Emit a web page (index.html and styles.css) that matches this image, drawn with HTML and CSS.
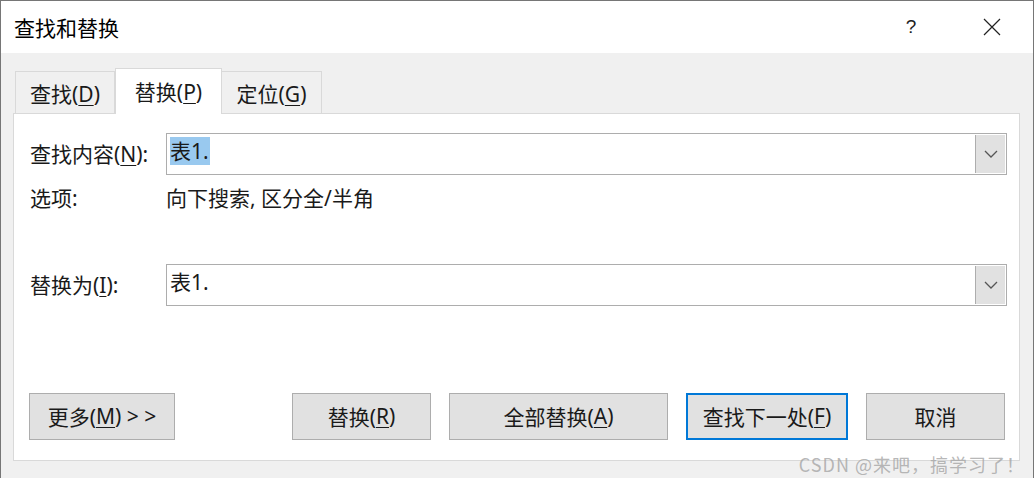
FILE: index.html
```html
<!DOCTYPE html>
<html lang="zh-CN">
<head>
<meta charset="utf-8">
<title>查找和替换</title>
<link rel="stylesheet" href="styles.css">
</head>
<body>
<div class="window">
  <div class="titlebar">
    <div class="title">查找和替换</div>
    <div class="tb-btn help">?</div>
    <div class="tb-btn close">
      <svg width="18" height="18" viewBox="0 0 18 18"><path d="M1 1 L17 17 M17 1 L1 17" stroke="#222" stroke-width="1.2" fill="none"/></svg>
    </div>
  </div>
  <div class="client">
    <div class="tabs">
      <div class="tab">查找(<u>D</u>)</div>
      <div class="tab active">替换(<u>P</u>)</div>
      <div class="tab">定位(<u>G</u>)</div>
    </div>
    <div class="panel">
      <div class="row field-row">
        <div class="label">查找内容(<u>N</u>):</div>
        <div class="combo">
          <div class="combo-text"><span class="sel">表1.</span></div>
          <div class="combo-btn"><svg width="14" height="8" viewBox="0 0 14 8"><path d="M1 1 L7 7 L13 1" stroke="#555" stroke-width="1.3" fill="none"/></svg></div>
        </div>
      </div>
      <div class="row options-row">
        <div class="label">选项:</div>
        <div class="options">向下搜索, 区分全/半角</div>
      </div>
      <div class="row field-row replace-row">
        <div class="label">替换为(<u>I</u>):</div>
        <div class="combo">
          <div class="combo-text">表1.</div>
          <div class="combo-btn"><svg width="14" height="8" viewBox="0 0 14 8"><path d="M1 1 L7 7 L13 1" stroke="#555" stroke-width="1.3" fill="none"/></svg></div>
        </div>
      </div>
      <div class="buttons">
        <div class="btn more">更多(<u>M</u>) &gt; &gt;</div>
        <div class="spacer"></div>
        <div class="btn replace">替换(<u>R</u>)</div>
        <div class="btn replace-all">全部替换(<u>A</u>)</div>
        <div class="btn find-next">查找下一处(<u>F</u>)</div>
        <div class="btn cancel">取消</div>
      </div>
    </div>
    <div class="watermark">CSDN @来吧，搞学习了！</div>
  </div>
</div>
</body>
</html>
```
FILE: styles.css
```css
* { box-sizing: border-box; }
html, body {
  margin: 0;
  padding: 0;
  width: 1034px;
  height: 478px;
  overflow: hidden;
  background: #f0f0f0;
}
body {
  font-family: "Noto Sans", "Noto Sans CJK SC", sans-serif;
  color: #1a1a1a;
}
u { text-decoration-thickness: 1px; text-underline-offset: 3px; }

.window {
  width: 1034px;
  height: 478px;
  border: 1px solid #767676;
  border-bottom: none;
  display: flex;
  flex-direction: column;
  background: #f0f0f0;
}
.titlebar {
  height: 52px;
  background: #fff;
  display: flex;
  align-items: center;
  flex: none;
}
.title {
  font-size: 21px;
  line-height: 24px;
  padding-left: 13px;
  flex: 1;
  color: #000;
  margin-top: 1px;
}
.tb-btn {
  display: flex;
  align-items: center;
  justify-content: center;
}
.help {
  width: 36px;
  font-size: 19px;
  font-family: "Liberation Sans", sans-serif;
  color: #222;
  margin-right: 45px;
}
.close {
  width: 36px;
  margin-right: 23px;
}

.client {
  flex: 1;
  position: relative;
  padding: 15px 13px 0 12px;
  display: flex;
  flex-direction: column;
}
.tabs {
  display: flex;
  align-items: flex-end;
  padding-left: 2px;
  height: 45px;
  position: relative;
  z-index: 1;
}
.tab {
  height: 42px;
  width: 100px;
  border: 1px solid #d9d9d9;
  border-bottom: none;
  background: #f0f0f0;
  font-size: 21px;
  line-height: 40px;
  text-align: center;
  padding-top: 2px;
}
.tab + .tab { border-left: none; }
.tab.active {
  height: 46px;
  width: 107px;
  margin-bottom: -1px;
  background: #fff;
  border-left: 1px solid #d9d9d9;
  padding-top: 3px;
}
.tab.active + .tab { border-left: none; }

.panel {
  width: 1007px;
  height: 348px;
  background: #fff;
  border: 1px solid #d9d9d9;
  padding: 19px 12px 0 16px;
  display: flex;
  flex-direction: column;
}
.row {
  display: flex;
  align-items: center;
}
.label {
  width: 136px;
  font-size: 21px;
  line-height: 26px;
  flex: none;
}
.field-row { height: 42px; }
.combo {
  flex: 1;
  height: 42px;
  border: 1px solid #adadad;
  display: flex;
  background: #fff;
}
.combo-text {
  flex: 1;
  font-size: 21px;
  line-height: 28px;
  padding: 3px 0 0 3px;
}
.sel {
  background: #99c9ef;
  padding: 0 1px 0 0;
  display: inline-block;
}
.combo-btn {
  width: 30px;
  background: #e1e1e1;
  border-left: 1px solid #adadad;
  margin: 1px;
  margin-left: 0;
  display: flex;
  align-items: center;
  justify-content: center;
}
.options-row { margin-top: 10px; }
.options {
  font-size: 21px;
  line-height: 26px;
}
.replace-row { margin-top: 53px; }

.buttons {
  display: flex;
  margin-top: 87px;
  margin-left: -1px;
  margin-right: 2px;
  gap: 18px;
}
.spacer { flex: 1; margin-left: -18px; }
.btn {
  height: 47px;
  background: #e1e1e1;
  border: 1px solid #adadad;
  font-size: 21px;
  display: flex;
  align-items: center;
  justify-content: center;
  padding-bottom: 2px;
}
.more { width: 146px; }
.replace { width: 139px; }
.replace-all { width: 219px; }
.find-next { width: 162px; border: 2px solid #0078d7; }
.cancel { width: 139px; }

.watermark {
  position: absolute;
  right: 8px;
  bottom: 3px;
  font-size: 18px;
  line-height: 22px;
  color: rgba(165, 165, 165, 0.8);
  font-family: "Noto Sans CJK SC", sans-serif;
  letter-spacing: 1px;
}
```
